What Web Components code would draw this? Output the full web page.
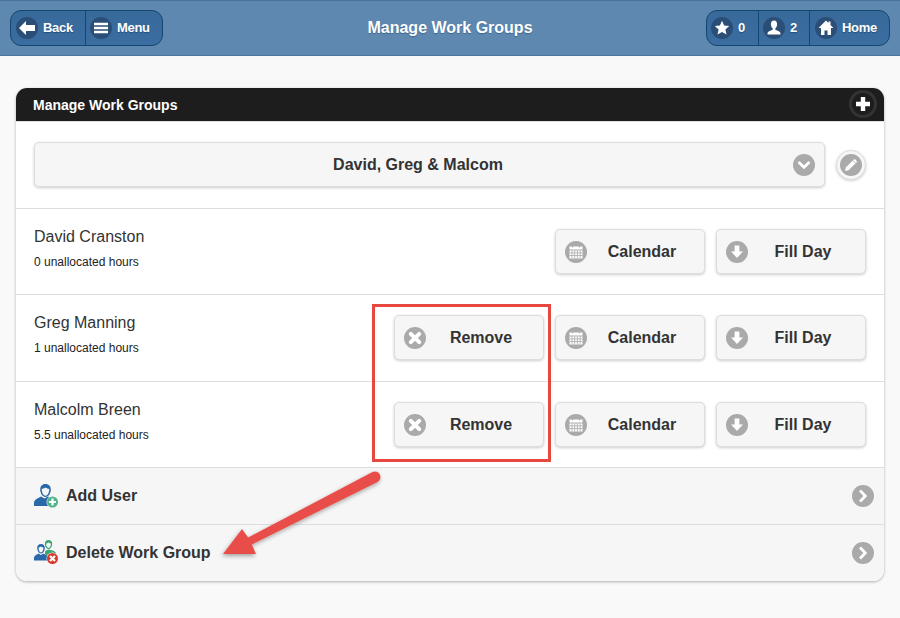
<!DOCTYPE html>
<html>
<head>
<meta charset="utf-8">
<title>Manage Work Groups</title>
<style>
html,body{margin:0;padding:0;height:100%;background:#f9f9f9;font-family:"Liberation Sans",Arial,sans-serif;overflow:hidden}
</style>
</head>
<body>
<wg-app>
  <wg-header slot="header" title="Manage Work Groups"></wg-header>
  <wg-card title="Manage Work Groups">
    <wg-select value="David, Greg &amp; Malcom"></wg-select>
    <wg-user name="David Cranston" hours="0 unallocated hours"></wg-user>
    <wg-user name="Greg Manning" hours="1 unallocated hours" removable style="height:87px"></wg-user>
    <wg-user name="Malcolm Breen" hours="5.5 unallocated hours" removable></wg-user>
    <wg-link label="Add User" icon="add" style="height:57px"></wg-link>
    <wg-link label="Delete Work Group" icon="del"></wg-link>
  </wg-card>
  <wg-callout slot="over"></wg-callout>
</wg-app>

<script>
const glyphs = {
  back:'<path d="M3 11 10 4V8H19V14H10V18Z" fill="#fff"/>',
  menu:'<path d="M4 5.800h14v2.500H4zM4 9.750h14v2.500H4zM4 13.700h14v2.500H4z" fill="#fff"/>',
  star:'<path d="M11 3.800 13.100 8.600 18.200 9.100 14.400 12.500 15.500 17.600 11 15 6.500 17.600 7.600 12.500 3.800 9.100 8.900 8.600Z" fill="#fff"/>',
  user:'<path d="M11 3.500C8.800 3.500 7.700 5.300 7.900 7.500 8 9.400 8.900 10.700 9.700 11.400V12.700C8.500 13.500 4.500 14 4.500 16.500V17.500H17.500V16.500C17.500 14 13.500 13.500 12.300 12.700V11.400C13.100 10.700 14 9.400 14.100 7.500 14.300 5.300 13.200 3.500 11 3.500Z" fill="#fff"/>',
  home:'<path d="M11 3.500 3.500 11H6V18H9.500V13.500H12.500V18H16V11H18.500L15.500 8V4.500H13.500V6Z" fill="#fff"/>',
  plus:'<path d="M8.800 4h4.400v4.800H18v4.400h-4.800V18H8.800v-4.800H4V8.800h4.800Z" fill="#fff"/>',
  chevdown:'<path d="M6.500 9 11 13.300 15.500 9" fill="none" stroke="#fff" stroke-width="2.800" stroke-linecap="square"/>',
  chevright:'<path d="M9 6.500 13.300 11 9 15.500" fill="none" stroke="#fff" stroke-width="2.800" stroke-linecap="square"/>',
  pencil:'<path d="M5 17 5.800 13.400 13.800 5.400a1 1 0 0 1 1.400 0L16.600 6.800a1 1 0 0 1 0 1.400L8.600 16.200Z" fill="#fff"/><path d="M12.800 6.400 15.600 9.200" stroke="#aaa" stroke-width=".8"/>',
  close:'<path d="M6.800 6.800 15.200 15.200M15.200 6.800 6.800 15.200" stroke="#fff" stroke-width="4" stroke-linecap="round"/>',
  down:'<path d="M8.600 4.500h4.800V10.500H17L11 17 5 10.500h3.600Z" fill="#fff"/>',
  cal:'<path d="M4.500 5.500h13v3h-13z" fill="#fff"/><path d="M4.500 9.500h13v8h-13z" fill="#fff"/><path d="M4.500 11.900h13M4.500 14.500h13M7 9.500v8M9.700 9.500v8M12.400 9.500v8M15.100 9.500v8" stroke="#aaa" stroke-width=".8"/><path d="M7.500 4v2.500M14.500 4v2.500" stroke="#aaa" stroke-width="1"/>'
};

class WgIcon extends HTMLElement {
  connectedCallback(){
    const g = this.getAttribute('glyph');
    this.attachShadow({mode:'open'}).innerHTML = `
      <style>
        :host{display:block;width:22px;height:22px;flex:none;border-radius:50%;background:var(--icon-bg,#aaa);box-shadow:var(--icon-ring,none)}
        svg{display:block}
      </style>
      <svg width="22" height="22" viewBox="0 0 22 22">${glyphs[g]}</svg>`;
  }
}
customElements.define('wg-icon',WgIcon);

class WgApp extends HTMLElement {
  constructor(){
    super();
    this.attachShadow({mode:'open'}).innerHTML = `
      <style>
        :host{display:block;position:relative;width:900px;height:618px;overflow:hidden}
        main{padding:32px 16px 0}
      </style>
      <slot name="header"></slot>
      <main><slot></slot></main>
      <slot name="over"></slot>`;
  }
}
customElements.define('wg-app',WgApp);

class WgNav extends HTMLElement {
  constructor(){
    super();
    this.attachShadow({mode:'open'}).innerHTML = `
      <style>
        :host{display:flex;height:34px;border:1px solid #14476e;border-radius:11px;background:linear-gradient(#38699b,#3b6da0);overflow:hidden}
      </style>
      <slot></slot>`;
  }
}
customElements.define('wg-nav',WgNav);

class WgNavBtn extends HTMLElement {
  connectedCallback(){
    this.attachShadow({mode:'open'}).innerHTML = `
      <style>
        :host{display:flex;align-items:center;box-sizing:border-box;width:var(--w);padding-left:var(--pl,5px);gap:5px;color:#fff;font:bold 13px "Liberation Sans",Arial,sans-serif;letter-spacing:-.3px;text-shadow:0 1px 1px #254e78;--icon-bg:#2b4e77}
        :host(:not(:last-child)){border-right:1px solid #14476e}
        span{margin-top:-2px}
      </style>
      <wg-icon glyph="${this.getAttribute('icon')}"></wg-icon><span>${this.getAttribute('label')}</span>`;
  }
}
customElements.define('wg-nav-btn',WgNavBtn);

class WgHeader extends HTMLElement {
  connectedCallback(){
    this.attachShadow({mode:'open'}).innerHTML = `
      <style>
        :host{display:flex;align-items:center;justify-content:space-between;box-sizing:border-box;height:56px;padding:0 10px;background:#5f88b0;border-top:1px solid #4a7199;border-bottom:1px solid #4d749c;position:relative}
        h1{position:absolute;left:0;right:0;top:0;bottom:0;margin:0;display:flex;align-items:center;justify-content:center;color:#fff;font:bold 16px "Liberation Sans",Arial,sans-serif;text-shadow:0 1px 1px #3d6388;pointer-events:none}
        wg-nav{position:relative;z-index:1}
      </style>
      <wg-nav>
        <wg-nav-btn icon="back" label="Back" style="--w:75px"></wg-nav-btn>
        <wg-nav-btn icon="menu" label="Menu" style="--w:76px;--pl:4px"></wg-nav-btn>
      </wg-nav>
      <h1>${this.getAttribute('title')}</h1>
      <wg-nav>
        <wg-nav-btn icon="star" label="0" style="--w:52px;--pl:4px"></wg-nav-btn>
        <wg-nav-btn icon="user" label="2" style="--w:51px;--pl:4px"></wg-nav-btn>
        <wg-nav-btn icon="home" label="Home" style="--w:79px"></wg-nav-btn>
      </wg-nav>`;
  }
}
customElements.define('wg-header',WgHeader);

class WgCard extends HTMLElement {
  connectedCallback(){
    this.attachShadow({mode:'open'}).innerHTML = `
      <style>
        :host{display:block;border-radius:11px;background:#fff;box-shadow:0 1px 3px rgba(0,0,0,.3)}
        header{display:flex;align-items:center;justify-content:space-between;box-sizing:border-box;height:34px;padding:0 10px 2px 17px;background:#1d1d1d;border-radius:11px 11px 0 0;border-bottom:1px solid #e2e2e2;color:#fff;font:bold 14px "Liberation Sans",Arial,sans-serif}
        header span{margin-top:2px}
        wg-icon{--icon-bg:#1d1d1d;--icon-ring:0 0 0 3px #333}
        .body{border-radius:0 0 11px 11px;overflow:hidden}
      </style>
      <header><span>${this.getAttribute('title')}</span><wg-icon glyph="plus"></wg-icon></header>
      <div class="body"><slot></slot></div>`;
  }
}
customElements.define('wg-card',WgCard);

class WgSelect extends HTMLElement {
  connectedCallback(){
    this.attachShadow({mode:'open'}).innerHTML = `
      <style>
        :host{display:flex;align-items:center;gap:11px;box-sizing:border-box;height:87px;padding:0 18px 1px;border-bottom:1px solid #ddd}
        .sel{flex:1;box-sizing:border-box;height:45px;display:flex;align-items:center;background:#f6f6f6;border:1px solid #ddd;border-radius:5px;box-shadow:0 1px 3px rgba(0,0,0,.2);padding:0 9px 0 20px;color:#333;font:bold 16px "Liberation Sans",Arial,sans-serif}
        .sel span{flex:1;text-align:center;padding-right:12px}
        .edit{width:30px;height:30px;box-sizing:border-box;padding:3px;border-radius:50%;background:#f6f6f6;border:1px solid #ddd;box-shadow:0 1px 3px rgba(0,0,0,.2)}
        .edit wg-icon{width:22px;height:22px}
      </style>
      <div class="sel"><span>${this.getAttribute('value')}</span><wg-icon glyph="chevdown"></wg-icon></div>
      <div class="edit"><wg-icon glyph="pencil"></wg-icon></div>`;
  }
}
customElements.define('wg-select',WgSelect);

class WgBtn extends HTMLElement {
  connectedCallback(){
    this.attachShadow({mode:'open'}).innerHTML = `
      <style>
        :host{display:flex;align-items:center;box-sizing:border-box;width:150px;height:45px;padding:0 0 0 9px;background:#f6f6f6;border:1px solid #ddd;border-radius:5px;box-shadow:0 1px 3px rgba(0,0,0,.2);color:#333;font:bold 16px "Liberation Sans",Arial,sans-serif}
        span{flex:1;text-align:center;padding:0 20px 0 13px}
      </style>
      <wg-icon glyph="${this.getAttribute('icon')}"></wg-icon><span>${this.getAttribute('label')}</span>`;
  }
}
customElements.define('wg-btn',WgBtn);

class WgUser extends HTMLElement {
  connectedCallback(){
    const rm = this.hasAttribute('removable') ? '<wg-btn icon="close" label="Remove"></wg-btn>' : '';
    this.attachShadow({mode:'open'}).innerHTML = `
      <style>
        :host{display:flex;align-items:flex-start;justify-content:space-between;box-sizing:border-box;height:86px;padding:20px 18px 0;border-bottom:1px solid #ddd;color:#333}
        .who{display:flex;flex-direction:column;gap:9px;margin-top:-1px}
        .name{font:16px "Liberation Sans",Arial,sans-serif}
        .hrs{font:12px "Liberation Sans",Arial,sans-serif;color:#222}
        .acts{display:flex;gap:11px}
      </style>
      <div class="who"><div class="name">${this.getAttribute('name')}</div><div class="hrs">${this.getAttribute('hours')}</div></div>
      <div class="acts">${rm}<wg-btn icon="cal" label="Calendar"></wg-btn><wg-btn icon="down" label="Fill Day"></wg-btn></div>`;
  }
}
customElements.define('wg-user',WgUser);

const linkIcons = {
  add:`<svg width="26" height="26" viewBox="0 0 26 26">
    <path d="M1 23V20C1 16.500 5.500 15 8 13.500L11.500 15.500 15 13.500C17 14.500 18 15 19 16V23Z" fill="#2a69a8"/>
    <path d="M12.500 1C9 1 7 3.500 7.200 7 7.400 10 9.200 14 12.500 14 15.800 14 17.600 10 17.800 7 18 3.500 16 1 12.500 1Z" fill="#2a69a8"/>
    <path d="M12.500 4.500C11.500 5.500 9.800 5.700 8.800 5.800 8.500 8.800 10 12.700 12.500 12.700 15 12.700 16.500 8.800 16.200 5.800 15 5.700 13.500 5.500 12.500 4.500Z" fill="#f6f6f6"/>
    <circle cx="19.500" cy="19" r="6" fill="#f6f6f6"/>
    <circle cx="19.500" cy="19" r="5.500" fill="#4fb38b"/><path d="M16 19h7M19.500 15.500v7" stroke="#fff" stroke-width="2.200"/></svg>`,
  del:`<svg width="26" height="26" viewBox="0 0 26 26">
    <path d="M15.500 0C13 0 11.700 1.800 11.800 4 12 6.300 13.200 9 15.500 9 17.800 9 19 6.300 19.200 4 19.300 1.800 18 0 15.500 0Z" fill="#3da56f"/>
    <path d="M15.500 2.500C14.800 3.200 13.900 3.400 13.200 3.500 13 5.500 14 8 15.500 8 17 8 18 5.500 17.800 3.500 17.100 3.400 16.200 3.200 15.500 2.500Z" fill="#f6f6f6"/>
    <path d="M12 14V11.500C12.500 10.500 14 10 15.500 9.500 17.500 10 22 10.500 23 13V16H14Z" fill="#3da56f"/>
    <path d="M1 20.500V18C1 15.500 4 14.500 5.500 13.500L8 15 10.500 13.500C12 14.500 15 15.500 15 18V20.500Z" fill="#2a69a8"/>
    <path d="M8 4C5.500 4 4 5.800 4.200 8.300 4.400 10.700 5.700 13.500 8 13.500 10.300 13.500 11.600 10.700 11.800 8.300 12 5.800 10.500 4 8 4Z" fill="#2a69a8"/>
    <path d="M8 6.500C7.300 7.200 6.400 7.400 5.600 7.500 5.500 9.500 6.500 12.500 8 12.500 9.500 12.500 10.500 9.500 10.400 7.500 9.600 7.400 8.700 7.200 8 6.500Z" fill="#f6f6f6"/>
    <circle cx="19.500" cy="18.500" r="6" fill="#f6f6f6"/>
    <circle cx="19.500" cy="18.500" r="5.500" fill="#d9392b"/><path d="M17 16 22 21M22 16 17 21" stroke="#fff" stroke-width="2.200"/></svg>`
};

class WgLink extends HTMLElement {
  connectedCallback(){
    this.attachShadow({mode:'open'}).innerHTML = `
      <style>
        :host{display:flex;align-items:center;box-sizing:border-box;height:56px;padding:0 10px 0 17px;background:#f6f6f6;color:#333;font:bold 16px "Liberation Sans",Arial,sans-serif}
        :host(:not(:last-child)){border-bottom:1px solid #ddd}
        .i{width:26px;height:26px;margin-right:7px;flex:none}
        svg{display:block}
        span{flex:1}
      </style>
      <div class="i">${linkIcons[this.getAttribute('icon')]}</div><span>${this.getAttribute('label')}</span><wg-icon glyph="chevright"></wg-icon>`;
  }
}
customElements.define('wg-link',WgLink);

// the red box and arrow drawn over the screenshot
class WgCallout extends HTMLElement {
  constructor(){
    super();
    this.attachShadow({mode:'open'}).innerHTML = `
      <style>
        :host{display:block;position:absolute;left:0;top:0;width:900px;height:618px;pointer-events:none}
        .box{position:absolute;left:372px;top:304px;width:173px;height:152px;border:3px solid #e8473f}
        svg{position:absolute;left:0;top:0}
      </style>
      <div class="box"></div>
      <svg width="900" height="618" viewBox="0 0 900 618">
        <defs><filter id="s" x="-20%" y="-20%" width="140%" height="140%"><feDropShadow dx="-1" dy="2" stdDeviation="2" flood-color="#000" flood-opacity=".35"/></filter></defs>
        <path d="M372.500 472.100 248.200 537.400 242 529 223 554 256 554 251.800 544.600 377.500 481.900A5.500 5.500 0 0 0 372.500 472.100Z" fill="#e84e48" filter="url(#s)"/>
      </svg>`;
  }
}
customElements.define('wg-callout',WgCallout);
</script>
</body>
</html>
